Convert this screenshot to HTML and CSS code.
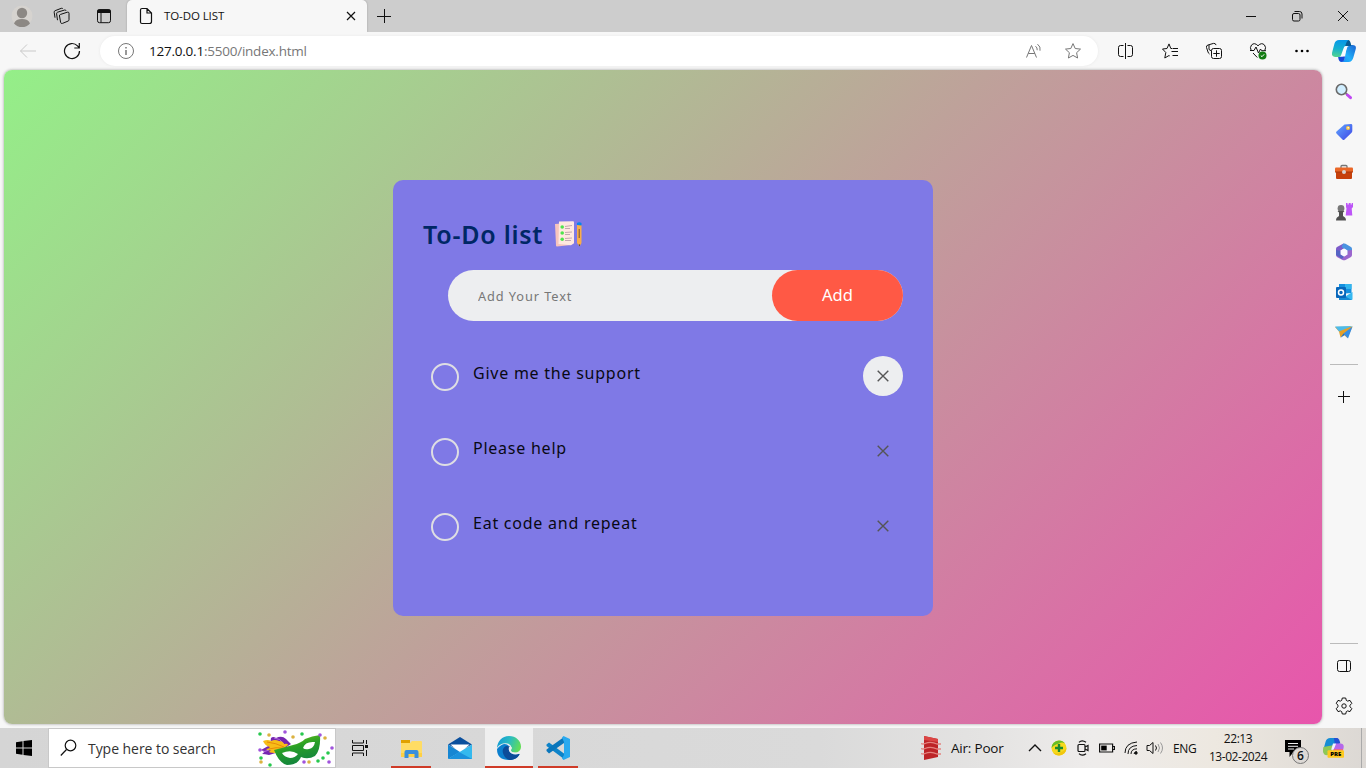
FILE: index.html
```html
<!DOCTYPE html>
<html lang="en">
<head>
<meta charset="utf-8">
<title>TO-DO LIST</title>
<link rel="stylesheet" href="styles.css">
</head>
<body>
<div class="desktop">
  <header class="titlebar">
    <div class="title-tools">
      <svg class="tool-profile" width="24" height="24" viewBox="0 0 24 24"><circle cx="12" cy="12" r="10.500" fill="#d6d3cf"/><circle cx="12" cy="9" r="5.200" fill="#8c8884"/><path d="M4 19.400c1-3 4-4.400 8-4.400s7 1.400 8 4.400a10.500 10.500 0 0 1-16 0z" fill="#8c8884"/></svg>
      <svg class="tool-spaces line" width="20" height="20" viewBox="0 0 20 20"><path d="M8.300 8.500l7-2.300q1.700-.4 1.700 1v6.600q0 1-1 1.300l-5.500 2.300q-1.500.5-1.900-1L7.500 10q-.3-1.200.8-1.500zM5.500 14.200L4.600 7.800q-.1-1.300 1-1.600l7-2.200q1.300-.3 1.400.8M3 11.700l-.8-5.400q-.2-1.200.9-1.600L9.300 2.300q1.300-.3 1.500.6"/></svg>
      <svg class="tool-actions" width="20" height="20" viewBox="0 0 20 20"><rect x="3.500" y="3.700" width="13" height="13" rx="2" fill="none" stroke="#111"/><path d="M3 7V5.500Q3 3.200 5.300 3.200h9.400Q17 3.200 17 5.500V7z" fill="#111"/><path d="M7 7v9.500" stroke="#111"/></svg>
    </div>
    <div class="tab">
      <svg class="line" width="14" height="18" viewBox="0 0 14 18" stroke-width="1.200"><path d="M3 1.500h5l4.500 4.500v8.500q0 2-2 2H3q-1.500 0-1.500-1.500V3q0-1.500 1.500-1.500zM8 1.500V6h4.500"/></svg>
      <span class="tab-name">TO-DO LIST</span>
      <svg class="line tab-close" width="10" height="10" viewBox="0 0 10 10" stroke-width="1.200"><path d="M1 1l8 8M9 1L1 9"/></svg>
    </div>
    <svg class="line new-tab" width="16" height="16" viewBox="0 0 16 16"><path d="M8.500 1v14M1 8.500h14"/></svg>
    <div class="window-buttons">
      <svg class="line" width="12" height="12" viewBox="0 0 12 12"><path d="M1 6.500h10"/></svg>
      <svg class="line" width="12" height="12" viewBox="0 0 12 12"><rect x="1.500" y="3.500" width="7.500" height="7.500" rx="1.500"/><path d="M3.500 1.500h5Q11 1.500 11 4v4.500"/></svg>
      <svg class="line" width="12" height="12" viewBox="0 0 12 12"><path d="M1 1l10 10M11 1L1 11"/></svg>
    </div>
  </header>

  <nav class="toolbar">
    <div class="tool"><svg class="line faded" width="18" height="16" viewBox="0 0 18 16"><path d="M17 8H1.500M8 1.500L1.500 8 8 14.500"/></svg></div>
    <div class="tool"><svg class="line" width="18" height="18" viewBox="0 0 18 18" stroke-width="1.200"><path d="M16.500 9A7.500 7.500 0 1 1 14.500 3.900L16 5.500M16.300 1v5h-5"/></svg></div>
    <div class="address">
      <svg class="line grey" width="18" height="18" viewBox="0 0 18 18"><circle cx="9" cy="9" r="7.500"/><path d="M9 8v5M9 5v1.400" stroke-width="1.500"/></svg>
      <span class="url"><b>127.0.0.1</b>:5500/index.html</span>
      <svg class="line grey read-aloud" width="18" height="16" viewBox="0 0 18 16"><path d="M1.500 14.500L6.500 2.500l5 12M3.300 10.500h6.500M10.500 3.200q2 1.500 1.700 4M12.500 1.200q3.500 2.500 2.500 6.500"/></svg>
      <svg class="line grey" width="18" height="18" viewBox="0 0 18 18"><path d="M9 1.600l2.200 4.900 5.300.6-3.900 3.600 1 5.300L9 13.400 4.400 16l1-5.300-3.900-3.600 5.300-.6z"/></svg>
    </div>
    <div class="tool after-address"><svg class="line" width="18" height="18" viewBox="0 0 18 18"><path d="M6.500 3.500h-3q-2 0-2 2v7q0 2 2 2h3M10.500 3.500h3q2 0 2 2v7q0 2-2 2h-3M8.500 1v16"/></svg></div>
    <div class="tool"><svg class="line" width="18" height="18" viewBox="0 0 18 18"><path d="M11 6.500H9.800L8 1.900 6 6.500 1.500 7l3.300 3.500-1 5.500 4.200-2.500.7.400M11.500 6.500h5.500M10.500 9.500h6.500M11.500 13.500H17"/></svg></div>
    <div class="tool"><svg class="line" width="18" height="18" viewBox="0 0 18 18"><rect x="6.500" y="6.500" width="10" height="10" rx="2"/><path d="M11.500 8.300v6.400M8.300 11.500h6.400M4.500 12Q3.500 11.500 3 10L1.500 5.500Q1 3.500 3 3L8.500 1.400q2-.4 2.600 1.700M4 3v4.500L6.500 9"/></svg></div>
    <div class="tool"><svg class="line" width="18" height="18" viewBox="0 0 18 18"><path d="M2.200 8.500Q.5 5.500 2.500 3q3-3 6.500.8Q12.500 0 15.500 3q2 2.500.3 5.500M1 8.500h4L7 5l2.500 6L11.500 7l1.200 1.700H17M4 11l4.300 4.500"/><circle cx="13.500" cy="13.500" r="4" fill="#137c13" stroke="none"/><path d="M11.800 13.600l1.200 1.100 2.200-2.400" stroke="#fff"/></svg></div>
    <div class="tool"><svg width="16" height="4" viewBox="0 0 16 4"><circle cx="2.500" cy="2" r="1.300"/><circle cx="8" cy="2" r="1.300"/><circle cx="13.500" cy="2" r="1.300"/></svg></div>
    <div class="copilot"><svg width="24" height="24" viewBox="0 0 24 24">
      <defs><linearGradient id="cpA" x1=".3" y1="0" x2=".2" y2="1"><stop offset="0" stop-color="#0898e8"/><stop offset=".5" stop-color="#16b0cf"/><stop offset="1" stop-color="#54d58e"/></linearGradient><linearGradient id="cpB" x1="0" y1="1" x2="1" y2="0"><stop offset="0" stop-color="#1a8cf6"/><stop offset=".4" stop-color="#20b0fa"/><stop offset="1" stop-color="#1a62d0"/></linearGradient></defs>
      <path d="M15 6h5.500q4.300 0 3.200 4.300L21.500 18q-1.200 5-5 5H8.500q4-.5 4.500-5z" fill="url(#cpB)"/>
      <path d="M6 17.500h7q-.5 5.500-4 5.500-2.300-.3-3-5.500z" fill="#1548d8"/>
      <path d="M12 1h4.500q2 .5 2.800 6H16q-3 0-4 4z" fill="#085b93"/>
      <path d="M7 1h9.500q-2 1-3 5l-2 7q-1.500 5-5 5H3q-4-.4-2.900-4.500L2.500 4.500Q3.500 1 7 1z" fill="url(#cpA)"/>
      <path d="M15 7h-1.500q-1.500 0-2.200 3L9.500 15q-.5 2-2 2.500h2.700q2.200 0 3-3L15 9q.5-2 2-2z" fill="#f8fbff"/></svg></div>
  </nav>

  <div class="middle">
    <main class="page">
      <section class="todo">
        <h1 class="heading">To-Do list
          <svg class="notes" width="30" height="28" viewBox="0 0 30 28"><path d="M2 4l14-1 2 22-14 1.500q-1 0-1-1z" fill="#f7c4bd"/><path d="M6 1.500L20 1.200q1 0 1 1v21l-3 2L5.500 24z" fill="#ffe8df"/><path d="M12 6.500l7-1M12 8.500h5M12 12.500l7-.5M12 14.500h5M12 18.500l7-.5M12 20.500h6" stroke="#bca0aa" stroke-width=".9"/><circle cx="9.200" cy="7" r="1.800" fill="#4fe54d"/><circle cx="9.200" cy="13" r="1.800" fill="#4fe54d"/><circle cx="9.200" cy="19.300" r="1.800" fill="#4fe54d"/><path d="M24 5h4.500v18l-1.800 3.500L24 23z" fill="#f9ad49"/><path d="M24 5V3q2-1.500 4.500 0v2.500z" fill="#0785ee"/><path d="M26.200 9v9" stroke="#765232"/><path d="M25.700 24.500h1.500l-.7 2z" fill="#333"/></svg>
        </h1>
        <form class="entry">
          <input class="entry-text" type="text" placeholder="Add Your Text">
          <button class="entry-add" type="button">Add</button>
        </form>
        <ul class="tasks">
          <li class="task"><i class="check"></i><span class="task-name">Give me the support</span><span class="remove hovered"><svg width="12" height="12" viewBox="0 0 12 12"><path d="M.7.7l10.600 10.600M11.300.7L.7 11.300"/></svg></span></li>
          <li class="task"><i class="check"></i><span class="task-name">Please help</span><span class="remove"><svg width="12" height="12" viewBox="0 0 12 12"><path d="M.7.7l10.600 10.600M11.300.7L.7 11.300"/></svg></span></li>
          <li class="task"><i class="check"></i><span class="task-name">Eat code and repeat</span><span class="remove"><svg width="12" height="12" viewBox="0 0 12 12"><path d="M.7.7l10.600 10.600M11.300.7L.7 11.300"/></svg></span></li>
        </ul>
      </section>
    </main>
    <aside class="sidebar">
      <div class="side"><svg width="18" height="18" viewBox="0 0 18 18"><path d="M11 10.500l1.500 1.500" stroke="#666" stroke-width="2"/><path d="M12.500 12l3 2.700" stroke="#c047f3" stroke-width="3" stroke-linecap="round"/><circle cx="6.500" cy="6.500" r="5.200" fill="#d0eeff" stroke="#6a6a6a" stroke-width="1.600"/></svg></div>
      <div class="side"><svg width="18" height="18" viewBox="0 0 18 18"><defs><linearGradient id="tg" x1="0" y1="0" x2="1" y2="1"><stop stop-color="#62a8ff"/><stop offset="1" stop-color="#3d44e5"/></linearGradient></defs><path d="M9.500 1.500L16 1q1.300 0 1.300 1.300V8q0 1-1 2L9.500 16.500q-1 1-2 0l-6-6q-1-1 0-2z" fill="url(#tg)"/><circle cx="13" cy="5" r="2" fill="#ffc83d"/><circle cx="13.200" cy="4.800" r=".8" fill="#fff"/></svg></div>
      <div class="side"><svg width="18" height="18" viewBox="0 0 18 18"><path d="M6 5V3.500q0-1 1-1h4q1 0 1 1V5" fill="none" stroke="#757575" stroke-width="1.300"/><path d="M1 4.500h16q1 0 1 1V9H0V5.500q0-1 1-1z" fill="#ea6727"/><path d="M1 9h16v6q0 1-1 1H2q-1 0-1-1z" fill="#c6400b"/><path d="M0 9h18" stroke="#a8370c"/><circle cx="9" cy="9" r="2" fill="#d8d2cf"/></svg></div>
      <div class="side"><svg width="18" height="18" viewBox="0 0 18 18"><path d="M11 0h1.500v1.500h1.200V0h2v1.500h1V0H18v4l-1.300 1.500.6 7h-6.600l.8-7L11 4z" fill="#bd55f7"/><circle cx="6" cy="5.500" r="3.400" fill="#777"/><path d="M2.500 8h7L8 9.500V13l2 1.500q1 1 1 3H1q0-2 1-3L4 13V9.500z" fill="#505050"/></svg></div>
      <div class="side"><svg width="18" height="18" viewBox="0 0 18 18"><path d="M8.500.5L2 4Q1 4.700 1 6v6.500l4.600-1.100v-4L13 3.200z" fill="#7c5bc9"/><path d="M8 .8q1-.6 2.500 0L16 4q1 .7 1 2v6l-4.600-.6v-4L6.500 4z" fill="#4a93e0"/><path d="M17 7v5q0 1.200-1 2l-5.500 3q-1.500.7-3 0L2 14q-1-.6-1-2.500l4.600-1L9 13.400l3.400-2V7.500z" fill="#9b66ce"/><path d="M1 7v5l6 4 2-2.600-3.400-2V8z" fill="#5565c4"/><path d="M9 5.500l3.400 2v4L9 13.400l-3.400-2v-4z" fill="#fbf9ff"/></svg></div>
      <div class="side"><svg width="18" height="18" viewBox="0 0 18 18"><path d="M4 1h12.500v9L4 11z" fill="#1490df"/><path d="M10 1h6.500v5H10z" fill="#32b6ee"/><path d="M4 9l7 4 6.500-4v7q0 1-1 1H4z" fill="#35b8f1"/><path d="M17 17L4 10v7z" fill="#168ad4"/><rect x="1" y="4" width="10" height="11" rx="1" fill="#0867bb"/><circle cx="6" cy="9.500" r="2.500" fill="none" stroke="#fff" stroke-width="1.500"/></svg></div>
      <div class="side"><svg width="18" height="18" viewBox="0 0 18 18"><path d="M0 4L17.500 3.500 12.500 15 8.500 11.500 5.500 14.500 4 8.500z" fill="#e6a027"/><path d="M0 3.500L17.500 3 4 8.500z" fill="#4dbbea"/><path d="M17.500 3.500L8.500 10.500l4.500 5z" fill="#348ee6"/><path d="M5.500 14.800l3-4.300 1.300 1.500z" fill="#206db9"/></svg></div>
      <hr class="rule">
      <svg class="line side-plus" width="14" height="14" viewBox="0 0 14 14"><path d="M6.500 1v12M1 6.500h12"/></svg>
      <hr class="rule rule-low">
      <svg class="line side-panel" width="16" height="14" viewBox="0 0 16 14"><rect x="1.500" y="1.500" width="13" height="11" rx="2"/><path d="M10.500 1.500v11"/></svg>
      <svg class="line side-gear" width="18" height="18" viewBox="0 0 18 18"><path d="M7.300 1h3.400l.6 2.400 1.300.7 2.400-.7 1.800 3-1.800 1.800v1.600l1.800 1.800-1.800 3-2.400-.7-1.300.7-.6 2.400H7.300l-.6-2.400-1.300-.7-2.400.7-1.800-3L3 9.800V8.200L1.200 6.400l1.800-3 2.400.7 1.300-.7z" stroke-linejoin="round"/><circle cx="9" cy="9" r="2.200"/></svg>
    </aside>
  </div>

  <footer class="taskbar">
    <div class="start"><svg width="16" height="16" viewBox="0 0 16 16"><path d="M0 2.200L6.500 1.300V7.500H0zM7.500 1.100L16 0v7.500H7.500zM0 8.500h6.500v6.200L0 13.800zM7.500 8.500H16V16L7.500 14.900z"/></svg></div>
    <div class="search">
      <svg class="line" width="18" height="18" viewBox="0 0 18 18" stroke-width="1.200"><circle cx="10.500" cy="6.500" r="5.300"/><path d="M6.500 10.500L.8 16.500"/></svg>
      <span class="search-hint">Type here to search</span>
      <svg width="78" height="38" viewBox="0 0 78 38">
        <defs><linearGradient id="mask" x1="0" y1="0" x2=".4" y2="1"><stop stop-color="#83cc12"/><stop offset=".5" stop-color="#299f27"/><stop offset="1" stop-color="#13853e"/></linearGradient></defs>
        <path d="M15 9q2-2 5 0 6-3 10 1l5 5-12 8-10 3q-4-1-7-1 2-1 3-3-3 0-4-1l9-5z" fill="#7526b0"/>
        <path d="M18 9q6 0 10 6M13 21l-6 2" stroke="#b369dc" fill="none"/>
        <path d="M7 12q5-2 8 0 4-2 8 0 4 0 5 3 4-1 4 1l-11 8q-6 0-8-1l2-2q-3 1-5-1 3 0 4-2-5-1-7-6z" fill="#f8bd18"/>
        <path d="M11 13q9 1 17 5M13 20q7-2 14-1" stroke="#e78a08" fill="none"/>
        <path d="M18 21q8-2 19-5 8-2 12-6 7-3 15-4 1 15-5 21-7 4-14 1-3 8-14 8-8-2-13-15z" fill="url(#mask)"/>
        <path d="M26 24q9-4 16 1-3 4-8 4-6-1-8-5zM47 19q2-7 12-6-1 6-6 7-4 1-6-1z" fill="#fff"/>
        <g fill="#a054dc"><circle cx="29" cy="3" r="1.800"/><circle cx="64" cy="6" r="1.800"/><circle cx="4" cy="21" r="1.800"/><circle cx="76" cy="19" r="1.800"/><circle cx="73" cy="33" r="1.800"/><circle cx="48" cy="33" r="1.800"/></g>
        <g fill="#27c84e"><circle cx="4" cy="5" r="1.800"/><circle cx="46" cy="5" r="1.800"/><circle cx="5" cy="29" r="1.800"/><circle cx="72" cy="24" r="1.800"/><circle cx="62" cy="32" r="1.800"/><circle cx="14" cy="36" r="1.800"/><circle cx="67" cy="29" r="1.800"/></g>
        <g fill="#dbb240"><circle cx="13" cy="6" r="1.800"/><circle cx="37" cy="8" r="1.800"/><circle cx="69" cy="9" r="1.800"/><circle cx="5" cy="33" r="1.800"/><circle cx="53" cy="33" r="1.800"/></g>
      </svg>
    </div>
    <div class="app task-view"><svg class="line" width="18" height="18" viewBox="0 0 18 18"><path d="M1.500 1v3h11V1M1.500 17v-3h11v3M1.500 6.500h11v5h-11zM15.500 1v4M15.500 11v6"/><path d="M14 6h3v3h-3z" fill="#111" stroke="none"/></svg></div>
    <div class="app running"><svg width="24" height="24" viewBox="0 0 24 24"><path d="M2 4h9v3H2z" fill="#e0a100"/><path d="M2 7h9l2-2h9q1 0 1 1v15H2z" fill="#ffdc64"/><path d="M2 17h21v4H2z" fill="#ffd044"/><path d="M5.500 22v-6q0-2 2-2h10q2 0 2 2v6h-4v-4h-6v4z" fill="#3b8fdc"/></svg></div>
    <div class="app"><svg width="24" height="24" viewBox="0 0 24 24"><path d="M0 8.500L12 1l12 7.500-12 6z" fill="#0a4f9d"/><path d="M2.500 8.500h19L12 17z" fill="#fff"/><path d="M0 8.500L12 16 0 23z" fill="#1686d3"/><path d="M24 8.500V23H0z" fill="#35b9ee"/><path d="M0 23L11 16l13 7z" fill="#1c91dc"/></svg></div>
    <div class="app running active"><svg width="26" height="26" viewBox="0 0 26 26"><defs><linearGradient id="edge" x1="0" y1=".2" x2="1" y2=".5"><stop stop-color="#1199d8"/><stop offset=".5" stop-color="#2bbcc0"/><stop offset="1" stop-color="#62dd58"/></linearGradient></defs>
      <path d="M1 14Q1 25 13 25q7 0 10.500-5.500L20 18q-5 1-7-2t0-5q-5-5-12 3z" fill="#0b7fce"/>
      <path d="M10 11q-5 3-2.500 8.500Q10 25 15 25q6-1 8.500-5.500.3-1-.8-.8-5 2-8.700-1.200-2.500-3 0-6z" fill="#0c4c99"/>
      <path d="M1 13C1.500 6 6 1 13 1c7 0 12 5 12 10.500 0 4-3 6-6 6-3.500 0-5-1-4-3Q16.500 10 11.500 8.500 4.500 7.500 1 13z" fill="url(#edge)"/>
      <path d="M13 12q2.500-1 3 1-2.200 3.200.5 4.200 3 .9 6.500.3.800.3.300 1.300-4.300 1.700-7.800-.3Q12 16 13 12z" fill="#eee"/></svg></div>
    <div class="app running"><svg width="26" height="26" viewBox="0 0 26 26"><path d="M1.500 9.500L4 7.500l15 11V24L1.500 11z" fill="#0d83c9"/><path d="M1.500 16L4 18.500 19 8V2L1.500 14.500z" fill="#0a76bb"/><path d="M18.500 1l6.500 3v18l-6.500 3-1.500-1.500L19 20V7l-2-4.500z" fill="#29a9ef"/></svg></div>
    <div class="tray">
      <svg class="air" width="20" height="26" viewBox="0 0 20 26"><path d="M3 1l14 3v18L3 25z" fill="#bd2427"/><path d="M3 1l14 3v3L3 5z" fill="#db4544"/><g fill="none" stroke="#e48480" stroke-width="1.300"><path d="M0 8.500q2 1 4 0 6-2.500 12 .5h4M0 13.500q2 1 4 0 6-2.500 12 .5h4M0 18.500q2 1 4 0 6-2.500 12 .5h4"/></g></svg>
      <span class="air-text">Air: Poor</span>
      <div class="slot"><svg class="line" width="14" height="8" viewBox="0 0 14 8" stroke-width="1.400"><path d="M1 7l6-6 6 6"/></svg></div>
      <div class="slot"><svg width="16" height="16" viewBox="0 0 16 16"><circle cx="8" cy="8" r="7.500" fill="#f6d91c"/><path d="M.5 8Q1 1 8 .5q4 0 6 3-3-2-6 0-5 1-7.500 4.500z" fill="#66bd27"/><path d="M15.500 8Q15 15 8 15.500q-4 0-6-3 4 2 7 0 4-1 6.500-4.500z" fill="#f1c60e"/><path d="M8 4v8M4 8h8" stroke="#198a2e" stroke-width="2.400"/></svg></div>
      <div class="slot"><svg class="line" width="14" height="18" viewBox="0 0 14 18" stroke-width="1.200"><rect x="2" y="5.500" width="7" height="7" rx="1"/><path d="M9 8l3-1.500v5L9 10M3 3.300q3-3 7 0M3 14.700q3 3 7 0"/></svg></div>
      <div class="slot"><svg width="16" height="10" viewBox="0 0 16 10"><path d="M.6 1h13v8H.6zM14 3.500h1.500v3H14" fill="none" stroke="#111" stroke-width="1.200"/><path d="M2.200 2.600h5.500v4.800H2.200z"/></svg></div>
      <div class="slot"><svg class="line" width="14" height="14" viewBox="0 0 14 14"><path d="M1 12Q1 2 13 1M4 13q0-8 9-8.500M7 13q0-5 6-5.200M10 13q.2-2 3-2.300"/><circle cx="12" cy="12" r="1.200" fill="#111"/></svg></div>
      <div class="slot"><svg class="line" width="18" height="14" viewBox="0 0 18 14"><path d="M1 4.500h2.500L7 1.500v11L3.500 9.500H1zM9.500 4.500q2 2.500 0 5"/><path d="M12 3q3 4 0 8M14.500 1.500q4 5.500 0 11" stroke="#999"/></svg></div>
      <span class="lang">ENG</span>
      <div class="clock"><span>22:13</span><span>13-02-2024</span></div>
      <div class="notice"><svg width="16" height="17" viewBox="0 0 16 17"><path d="M0 0h16v12H8.500l-4 5v-5H0z"/><path d="M3 3.500h10M3 6.300h10M3 9h6" stroke="#eee"/></svg><span class="count">6</span></div>
      <svg class="preview" width="22" height="22" viewBox="0 0 24 24"><path d="M9 1h7l3 6-6 3-4 8H5q-5 0-3-6L4 5q1-4 5-4z" fill="#168dd4"/><path d="M1.500 11l10.500-2-2 8q-1 3-5 3-5 0-3.500-9z" fill="#8fc956"/><path d="M13 1h4q2 1 3 6l-6 1z" fill="#2350d4"/><path d="M15 7h5q4.500 0 3.500 5l-2 8H10z" fill="#b567ea"/><path d="M12 7h3.500l-3 7H10z" fill="#f4f0ff"/><path d="M13 13h10l-2 7H10z" fill="#ee6984"/><rect x="6" y="14.500" width="18" height="8" rx="1" fill="#ffc91f"/><text x="15" y="21.100" text-anchor="middle" class="pre">PRE</text></svg>
      <div class="peek"></div>
    </div>
  </footer>
</div>
</body>
</html>
```

FILE: styles.css
```css
* { box-sizing: border-box; }
body { margin: 0; font-family: "Open Sans", "Noto Sans", sans-serif; font-size: 12px; color: #111; }
svg { display: block; flex: none; }
.line { fill: none; stroke: #111; }
.grey { stroke: #777; }
.faded { stroke: #c9c9c9; }
.desktop { width: 1366px; height: 768px; display: flex; flex-direction: column; overflow: hidden; background: #f7f7f7; }

.titlebar { height: 32px; flex: none; display: flex; align-items: center; background: #cdcdcd; }
.title-tools { width: 127px; display: flex; align-items: center; padding-left: 10px; }
.tool-spaces { margin-left: 18px; }
.tool-actions { margin-left: 22px; }
.tab { width: 240px; height: 32px; display: flex; align-items: center; padding: 0 11px 0 12px; background: #f7f7f7; border-radius: 5px 5px 0 0; box-shadow: 0 0 2px #999; clip-path: inset(0 -3px 0 -3px); }
.tab-name { flex: 1; margin: -1px 0 0 11px; font-size: 11.500px; letter-spacing: -.1px; white-space: nowrap; }
.new-tab { margin-left: 9px; }
.window-buttons { margin-left: auto; display: grid; grid-template-columns: repeat(3, 46px); justify-items: center; }

.toolbar { height: 38px; flex: none; display: flex; align-items: center; padding-left: 6px; }
.tool { width: 44px; display: flex; justify-content: center; }
.address { width: 998px; height: 30px; margin-left: 6px; display: flex; align-items: center; padding: 0 16px 0 17px; background: #fff; border-radius: 15px; box-shadow: 0 0 3px #e8e8e8; }
.url { flex: 1; margin-left: 14px; font-size: 13.500px; letter-spacing: -.23px; color: #777; }
.url b { font-weight: 400; color: #111; }
.read-aloud { margin-right: 21px; }
.after-address { margin-left: 6px; }
.copilot { width: 40px; display: flex; justify-content: center; }

.middle { flex: 1; display: flex; padding: 0 0 4px 4px; }
.page { width: 1318px; height: 654px; display: flex; padding: 110px 0 0 389px; border-radius: 8px; background: linear-gradient(135deg, #94ef88, #e855ac); box-shadow: 0 0 3px #999; }
.todo { width: 540px; height: 436px; padding: 40px 30px; border-radius: 10px; background: #7f79e6; font-family: "Noto Sans", sans-serif; }
.heading { height: 28px; margin: 0 0 22px; display: flex; align-items: center; font-size: 25px; font-weight: 600; letter-spacing: .75px; line-height: 28px; color: #002765; }
.notes { margin-left: 10px; }
.entry { height: 51px; margin: 0 0 25px 25px; display: flex; border-radius: 30px; background: #edeef0; }
.entry-text { flex: 1; min-width: 0; border: 0; padding: 0 0 0 30px; background: transparent; font-family: "Noto Sans", sans-serif; font-size: 12.800px; letter-spacing: .9px; }
.entry-text::placeholder { color: #777; }
.entry-add { width: 131px; border: 0; padding: 0 0 2px; border-radius: 40px; background: #ff5945; color: #fff; font: 16.500px "Noto Sans", sans-serif; }
.tasks { margin: 0; padding: 0; list-style: none; }
.task { height: 75px; display: flex; align-items: flex-start; padding: 10px 0 0 8px; }
.check { width: 28px; height: 28px; margin-top: 7px; border: 2px solid #dedee3; border-radius: 50%; }
.task-name { flex: 1; margin-left: 14px; line-height: 34px; font-size: 16px; color: #090913; letter-spacing: .76px; white-space: nowrap; }
.remove { width: 40px; height: 40px; display: grid; place-items: center; border-radius: 50%; }
.remove svg { fill: none; stroke: #555; stroke-width: 1.400; }
.hovered { background: #edeef0; }

.sidebar { width: 44px; display: flex; flex-direction: column; align-items: center; padding: 2px 0 5px; }
.side { height: 40px; display: flex; align-items: center; }
.rule { width: 28px; height: 1px; margin: 12px 0 0; border: 0; background: #bbb; flex: none; }
.side-plus { margin-top: 25px; }
.rule-low { margin-top: auto; }
.side-panel { margin-top: 15px; }
.side-gear { margin: 24px 0 4px; }

.taskbar { height: 40px; flex: none; display: flex; background: linear-gradient(90deg, #d5d5d5 0, #dadada 60%, #e4e3e2 72%, #eeeceb 80%, #ede8e0 89%, #dcd8d4 100%); }
.start { width: 48px; display: grid; place-items: center; }
.search { width: 288px; display: flex; align-items: center; padding-left: 11px; background: #fff; border: 1px solid #c8c8c8; }
.search-hint { width: 158px; margin: 0 10px; font-size: 14px; letter-spacing: -.05px; color: #333; white-space: nowrap; }
.app { width: 48px; margin-right: 1px; display: grid; place-items: center; }
.task-view { margin-right: 3px; }
.running { background: linear-gradient(#cf3b28, #cf3b28) center bottom / 40px 2px no-repeat; }
.active { background-color: #efefef; background-size: 48px 2px; }
.tray { margin-left: auto; width: 446px; display: flex; align-items: center; }
.air { margin-left: 1px; }
.air-text { width: 72px; margin-left: 10px; font-size: 13.500px; letter-spacing: -.2px; white-space: nowrap; }
.slot { width: 24px; display: flex; justify-content: center; }
.lang { width: 28px; margin-left: 6px; font-size: 12px; letter-spacing: -.3px; }
.clock { width: 74px; display: flex; flex-direction: column; align-items: center; line-height: 18px; font-size: 12px; letter-spacing: -.45px; white-space: nowrap; }
.notice { position: relative; width: 24px; margin-left: 10px; }
.count { position: absolute; left: 7px; top: 7px; width: 17px; height: 17px; border: 1px solid #777; border-radius: 50%; background: #ddd9d5; text-align: center; line-height: 15px; font-weight: 600; }
.preview { margin-left: 13px; }
.pre { font: 800 6.500px "Open Sans", sans-serif; }
.peek { width: 1px; height: 40px; margin-left: auto; margin-right: 4px; background: #aaa; }
```
